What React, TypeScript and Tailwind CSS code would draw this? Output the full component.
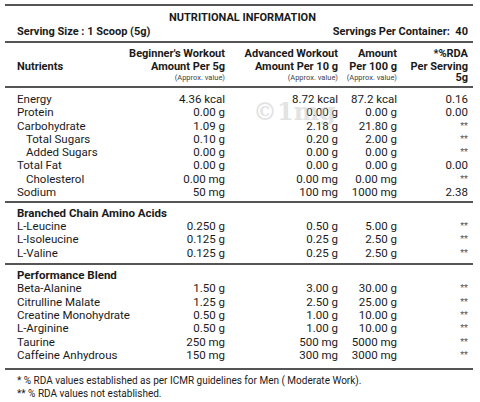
const cols = "grid grid-cols-[minmax(0,1fr)_100px_113px_59px_71px] items-center";

type Item = [string, string, string, string, string, boolean?];

const general: Item[] = [
  ["Energy", "4.36 kcal", "8.72 kcal", "87.2 kcal", "0.16"],
  ["Protein", "0.00 g", "0.00 g", "0.00 g", "0.00"],
  ["Carbohydrate", "1.09 g", "2.18 g", "21.80 g", "**"],
  ["Total Sugars", "0.10 g", "0.20 g", "2.00 g", "**", true],
  ["Added Sugars", "0.00 g", "0.00 g", "0.00 g", "**", true],
  ["Total Fat", "0.00 g", "0.00 g", "0.00 g", "0.00"],
  ["Cholesterol", "0.00 mg", "0.00 mg", "0.00 mg", "**", true],
  ["Sodium", "50 mg", "100 mg", "1000 mg", "2.38"],
];

const bcaa: Item[] = [
  ["L-Leucine", "0.250 g", "0.50 g", "5.00 g", "**"],
  ["L-Isoleucine", "0.125 g", "0.25 g", "2.50 g", "**"],
  ["L-Valine", "0.125 g", "0.25 g", "2.50 g", "**"],
];

const blend: Item[] = [
  ["Beta-Alanine", "1.50 g", "3.00 g", "30.00 g", "**"],
  ["Citrulline Malate", "1.25 g", "2.50 g", "25.00 g", "**"],
  ["Creatine Monohydrate", "0.50 g", "1.00 g", "10.00 g", "**"],
  ["L-Arginine", "0.50 g", "1.00 g", "10.00 g", "**"],
  ["Taurine", "250 mg", "500 mg", "5000 mg", "**"],
  ["Caffeine Anhydrous", "150 mg", "300 mg", "3000 mg", "**"],
];

function Row({ item }: { item: Item }) {
  const [name, a, b, c, rda, sub] = item;
  return (
    <div className={`${cols} text-[11.5px] leading-[13.3px] whitespace-nowrap`}>
      <div className={sub ? "pl-[9px]" : ""}>{name}</div>
      <div className="text-right">{a}</div>
      <div className="text-right">{b}</div>
      <div className="text-right">{c}</div>
      <div className={`text-right ${rda === "**" ? "text-[9px] text-[#555]" : ""}`}>{rda}</div>
    </div>
  );
}

function Head({ l1, l2, l3, bold3 }: { l1: string; l2: string; l3: string; bold3?: boolean }) {
  return (
    <div className="text-right whitespace-nowrap">
      <div className="font-bold leading-[13px]">{l1}</div>
      <div className="font-bold leading-[13px]">{l2}</div>
      <div className={bold3 ? "font-bold leading-[10px]" : "text-[7.5px] leading-[10px] text-[#444]"}>{l3}</div>
    </div>
  );
}

export default function App() {
  return (
    <div className="w-[480px] h-[402px] bg-white text-[#1a1a1a] text-[11px] font-['Roboto',sans-serif] pt-[4px] overflow-hidden">
      <div className="relative mx-[5px] w-[468px]">
        <div className="border-t-2 border-[#555] pl-[12px] pr-[5px] pt-[5px] pb-[2px] font-bold">
          <div className="text-center leading-[14px]">NUTRITIONAL INFORMATION</div>
          <div className="flex justify-between leading-[14px]">
            <span>Serving Size : 1 Scoop (5g)</span>
            <span className="whitespace-pre">Servings Per Container:  40</span>
          </div>
        </div>

        <div className="border-t-2 border-[#555] pl-[12px] pr-[5px] pt-[4px] pb-[3px]">
          <div className={cols}>
            <div className="font-bold pt-[5px]">Nutrients</div>
            <Head l1="Beginner's Workout" l2="Amount Per 5g" l3="(Approx. value)" />
            <Head l1="Advanced Workout" l2="Amount Per 10 g" l3="(Approx. value)" />
            <Head l1="Amount" l2="Per 100 g" l3="(Approx. value)" />
            <Head l1="*%RDA" l2="Per Serving" l3="5g" bold3 />
          </div>
        </div>

        <div className="border-t-2 border-[#555] pl-[12px] pr-[5px] pt-[5px] pb-[2px]">
          {general.map((it) => (
            <Row key={it[0]} item={it} />
          ))}
        </div>

        <div className="border-t-2 border-[#555] pl-[12px] pr-[5px] pt-[3.5px] pb-[3px]">
          <div className="font-bold text-[11.5px] leading-[13.3px]">Branched Chain Amino Acids</div>
          {bcaa.map((it) => (
            <Row key={it[0]} item={it} />
          ))}
        </div>

        <div className="border-t-2 border-[#555] pl-[12px] pr-[5px] pt-[4px] pb-[6px]">
          <div className="font-bold text-[11.5px] leading-[13.3px]">Performance Blend</div>
          {blend.map((it) => (
            <Row key={it[0]} item={it} />
          ))}
        </div>

        <div className="border-t-2 border-[#555] pl-[12px] pt-[3.5px] text-[10px] leading-[13.3px]">
          <div>* % RDA values established as per ICMR guidelines for Men ( Moderate Work).</div>
          <div>** % RDA values not established.</div>
        </div>

        <div className="absolute left-[248px] top-[96px] text-[24px] font-bold font-['DejaVu_Serif',serif] text-[#bbb] opacity-40 leading-none">
          ©1mg
        </div>
      </div>
    </div>
  );
}
